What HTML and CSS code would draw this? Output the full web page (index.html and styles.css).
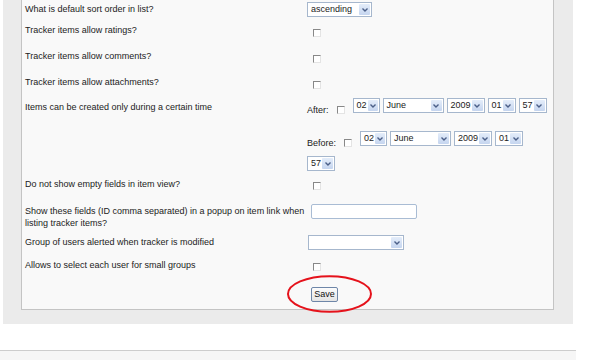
FILE: index.html
```html
<!DOCTYPE html>
<html lang="en">
<head>
    <meta charset="UTF-8">
    <meta name="viewport" content="width=device-width, initial-scale=1.0">
    <title>Tracker settings</title>
    <link rel="stylesheet" href="styles.css">
</head>
<body>
    <div class="page">
        <div class="panel">
            <div class="box">
                <div class="row r-sort">
                    <div class="label">What is default sort order in list?</div>
                    <div class="ctrl">
                        <span class="sel sel-sort"><span class="val">ascending</span><span class="arr"><svg width="6" height="4" viewBox="0 0 6 4"><polyline points="0.5,0.5 3,3 5.5,0.5"/></svg></span></span>
                    </div>
                </div>
                <div class="row r-chk">
                    <div class="label">Tracker items allow ratings?</div>
                    <div class="ctrl"><input type="checkbox" class="chk"></div>
                </div>
                <div class="row r-chk">
                    <div class="label">Tracker items allow comments?</div>
                    <div class="ctrl"><input type="checkbox" class="chk"></div>
                </div>
                <div class="row r-chk2">
                    <div class="label">Tracker items allow attachments?</div>
                    <div class="ctrl"><input type="checkbox" class="chk"></div>
                </div>
                <div class="row r-time">
                    <div class="label">Items can be created only during a certain time</div>
                    <div class="ctrl">
                        <div class="dates">
                            <span class="dlabel">After:</span>
                            <input type="checkbox" class="chk">
                            <span class="sel sel-2"><span class="val">02</span><span class="arr"><svg width="6" height="4" viewBox="0 0 6 4"><polyline points="0.5,0.5 3,3 5.5,0.5"/></svg></span></span>
                            <span class="sel sel-month"><span class="val">June</span><span class="arr"><svg width="6" height="4" viewBox="0 0 6 4"><polyline points="0.5,0.5 3,3 5.5,0.5"/></svg></span></span>
                            <span class="sel sel-year"><span class="val">2009</span><span class="arr"><svg width="6" height="4" viewBox="0 0 6 4"><polyline points="0.5,0.5 3,3 5.5,0.5"/></svg></span></span>
                            <span class="sel sel-2b"><span class="val">01</span><span class="arr"><svg width="6" height="4" viewBox="0 0 6 4"><polyline points="0.5,0.5 3,3 5.5,0.5"/></svg></span></span>
                            <span class="sel sel-2b"><span class="val">57</span><span class="arr"><svg width="6" height="4" viewBox="0 0 6 4"><polyline points="0.5,0.5 3,3 5.5,0.5"/></svg></span></span>
                        </div>
                        <div class="dates dates-before">
                            <span class="dlabel">Before:</span>
                            <input type="checkbox" class="chk">
                            <span class="sel sel-2"><span class="val">02</span><span class="arr"><svg width="6" height="4" viewBox="0 0 6 4"><polyline points="0.5,0.5 3,3 5.5,0.5"/></svg></span></span>
                            <span class="sel sel-month"><span class="val">June</span><span class="arr"><svg width="6" height="4" viewBox="0 0 6 4"><polyline points="0.5,0.5 3,3 5.5,0.5"/></svg></span></span>
                            <span class="sel sel-year"><span class="val">2009</span><span class="arr"><svg width="6" height="4" viewBox="0 0 6 4"><polyline points="0.5,0.5 3,3 5.5,0.5"/></svg></span></span>
                            <span class="sel sel-2b"><span class="val">01</span><span class="arr"><svg width="6" height="4" viewBox="0 0 6 4"><polyline points="0.5,0.5 3,3 5.5,0.5"/></svg></span></span>
                            <span class="sel sel-2b"><span class="val">57</span><span class="arr"><svg width="6" height="4" viewBox="0 0 6 4"><polyline points="0.5,0.5 3,3 5.5,0.5"/></svg></span></span>
                        </div>
                    </div>
                </div>
                <div class="row r-empty">
                    <div class="label">Do not show empty fields in item view?</div>
                    <div class="ctrl"><input type="checkbox" class="chk"></div>
                </div>
                <div class="row r-popup">
                    <div class="label">Show these fields (ID comma separated) in a popup on item link when listing tracker items?</div>
                    <div class="ctrl"><input type="text" class="txt"></div>
                </div>
                <div class="row r-group">
                    <div class="label">Group of users alerted when tracker is modified</div>
                    <div class="ctrl">
                        <span class="sel sel-group"><span class="val"></span><span class="arr"><svg width="6" height="4" viewBox="0 0 6 4"><polyline points="0.5,0.5 3,3 5.5,0.5"/></svg></span></span>
                    </div>
                </div>
                <div class="row r-small">
                    <div class="label">Allows to select each user for small groups</div>
                    <div class="ctrl"><input type="checkbox" class="chk"></div>
                </div>
                <div class="row r-save">
                    <div class="label"></div>
                    <div class="ctrl"><button class="save">Save</button></div>
                </div>
            </div>
        </div>
        <div class="rule"></div>
        <svg class="mark" width="90" height="42" viewBox="0 0 90 42">
            <ellipse cx="44.5" cy="21" rx="41.5" ry="17.8"/>
        </svg>
    </div>
</body>
</html>
```

FILE: styles.css
```css
*{
    margin: 0;
    padding: 0;
    box-sizing: border-box;
}
body{
    background: #fff;
    font-family: "Liberation Sans", Arial, sans-serif;
    font-size: 9px;
    color: #222;
}
.page{
    position: relative;
    width: 589px;
    height: 360px;
    padding-left: 3px;
}
.panel{
    width: 570px;
    background: #ebebeb;
    padding: 0 19px 14px 18px;
}
.box{
    background: #f9f9f9;
    border: 1px solid #c4c4c4;
    border-top: none;
    padding: 3px 0 7px 3px;
}
.row{
    display: flex;
    align-items: flex-start;
}
.label{
    width: 282px;
    flex-shrink: 0;
    line-height: 12px;
}
.ctrl{
    width: 244px;
    display: flex;
    flex-direction: column;
    align-items: flex-start;
}
.r-sort{ height: 21px; }
.r-chk{ height: 26px; }
.r-chk2{ height: 25px; }
.r-time{ height: 77px; }
.r-empty{ height: 27px; }
.r-popup{ height: 31px; }
.r-group{ height: 23px; }
.r-small{ height: 28px; }

/* checkbox */
.chk{
    appearance: none;
    -webkit-appearance: none;
    width: 8px;
    height: 8px;
    background: #fff;
    border: 1px solid;
    border-color: #888 #e4e4e4 #e4e4e4 #888;
    margin: 4px 0 0 6px;
}
.r-chk .chk,
.r-chk2 .chk{
    margin-top: 5px;
}

/* select look */
.sel{
    display: inline-flex;
    height: 15px;
    border: 1px solid #a6b7cd;
    background: #fff;
}
.sel .val{
    flex: 1;
    padding-left: 3px;
    line-height: 13px;
    white-space: nowrap;
}
.sel .arr{
    width: 11px;
    margin: 1px;
    border-radius: 1px;
    background: linear-gradient(#e4edfa, #c5d5ef);
    display: flex;
    align-items: center;
    justify-content: center;
}
.sel svg polyline{
    fill: none;
    stroke: #4b5f88;
    stroke-width: 1.4;
}
.sel-sort{
    width: 65px;
    margin-top: -1px;
}
.sel-group{
    width: 96px;
    margin: -1px 0 0 1px;
}
.sel-2{ width: 27px; }
.sel-2b{ width: 28px; }
.sel-month{ width: 61px; }
.sel-year{ width: 38px; }

.r-time .ctrl{
    margin-top: -3px;
}
.dates{
    display: flex;
    flex-wrap: wrap;
    align-items: flex-start;
    column-gap: 3px;
    row-gap: 7px;
    width: 244px;
}
.dates .dlabel{
    line-height: 12px;
    margin-top: 6px;
}
.dates .chk{
    margin: 8px 5px 0 5px;
}
.dates-before{
    margin-top: 15px;
}

.txt{
    width: 106px;
    height: 15px;
    border: 1px solid #a9bcd4;
    border-radius: 2px;
    background: #fff;
    margin: -1px 0 0 4px;
}
.save{
    width: 27px;
    height: 15px;
    margin-left: 4px;
    border: 1px solid #6e86a8;
    border-radius: 2px;
    background: linear-gradient(#fcfcfc, #e4e4e4);
    font-family: "Liberation Sans", Arial, sans-serif;
    font-size: 9px;
    color: #111;
    line-height: 13px;
}

.rule{
    width: 576px;
    margin: 26px 0 0 -3px;
    height: 10px;
    border-top: 1px solid #cdcdcd;
    background: #f6f6f6;
}
.mark{
    position: absolute;
    left: 285px;
    top: 273px;
}
.mark ellipse{
    fill: none;
    stroke: #e5121b;
    stroke-width: 2;
}
```
